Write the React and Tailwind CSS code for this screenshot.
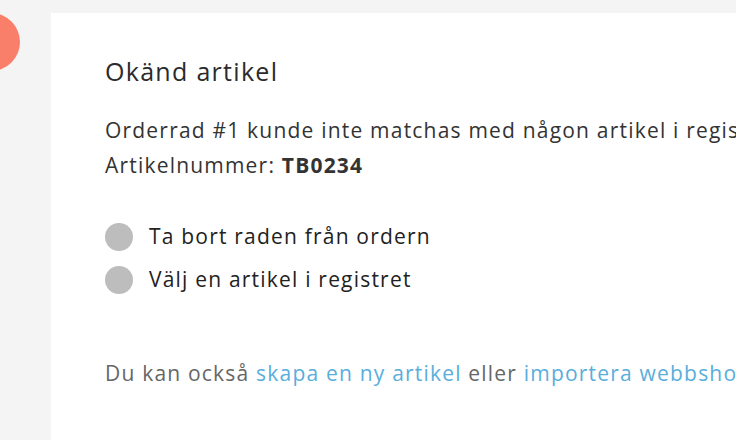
export default function App() {
  return (
    <div className="w-[736px] h-[440px] overflow-hidden bg-[#f4f4f4] relative" style={{ fontFamily: '"Open Sans", Lato, sans-serif' }}>
      {/* avatar bubble */}
      <div className="absolute left-[-38px] top-[13px] w-[58px] h-[58px] rounded-full bg-[#fa7f6a]" />
      <div className="ml-[51px] mt-[13px] h-[427px] bg-white pl-[54px] pt-[41px]">
        <h2 className="text-[25px] font-medium text-[#2b2b2b] leading-[34px] tracking-[1.3px]">
          Okänd artikel
        </h2>
        <div className="mt-[25px] text-[21px] leading-[35px] text-[#333] whitespace-nowrap tracking-[1.2px]">
          <p>Orderrad #1 kunde inte matchas med någon artikel i registret.</p>
          <p>
            Artikelnummer: <span className="font-bold">TB0234</span>
          </p>
        </div>
        <div className="mt-[40px] flex flex-col gap-[15px] text-[21px] text-[#222] tracking-[1.2px]">
          {['Ta bort raden från ordern', 'Välj en artikel i registret'].map((label) => (
            <label key={label} className="flex items-center gap-[16px] h-[28px]">
              <span className="w-[28px] h-[28px] rounded-full bg-[#bdbdbd] shrink-0" />
              <span>{label}</span>
            </label>
          ))}
        </div>
        <p className="mt-[64px] text-[21px] text-[#666] whitespace-nowrap tracking-[1.2px]">
          Du kan också <a className="text-[#59aedc]">skapa en ny artikel</a> eller{' '}
          <a className="text-[#59aedc]">importera webbshopens artiklar</a>.
        </p>
      </div>
    </div>
  );
}
